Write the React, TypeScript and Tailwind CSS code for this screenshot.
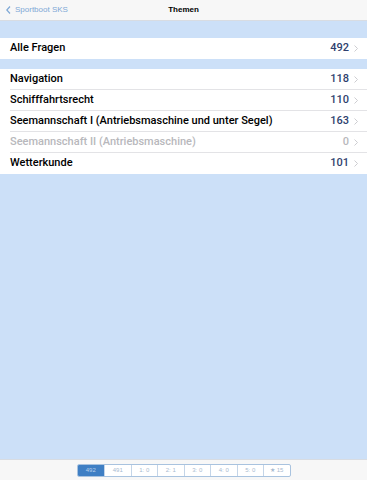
import React from "react";

const rows = [
  { title: "Navigation", count: 118 },
  { title: "Schifffahrtsrecht", count: 110 },
  { title: "Seemannschaft I (Antriebsmaschine und unter Segel)", count: 163 },
  { title: "Seemannschaft II (Antriebsmaschine)", count: 0, disabled: true },
  { title: "Wetterkunde", count: 101 },
];

const segments = ["492", "491", "1: 0", "2: 1", "3: 0", "4: 0", "5: 0", "★ 15"];

const Chevron: React.FC = () => (
  <svg width="4" height="7" viewBox="0 0 4 7" className="ml-[5px]">
    <path d="M0.5 0.5 L3.5 3.5 L0.5 6.5" fill="none" stroke="#c7c7cc" strokeWidth="0.9" />
  </svg>
);

const Row: React.FC<{ title: string; count: number; disabled?: boolean; last?: boolean }> = ({
  title,
  count,
  disabled,
  last,
}) => (
  <div className="flex h-[21px] items-center bg-white pl-[10px] font-['Roboto',sans-serif]">
    <div className={`flex h-full flex-1 items-center pr-[9px] ${last ? "" : "border-b border-[#e3e3e6]"}`}>
      <span className={`flex-1 text-[11px] font-medium ${disabled ? "text-[#b8b8bc]" : "text-black"}`}>
        {title}
      </span>
      <span className={`text-[11px] font-medium ${disabled ? "text-[#b8b8bc]" : "text-[#2f3f6e]"}`}>{count}</span>
      <Chevron />
    </div>
  </div>
);

export default function App() {
  return (
    <div
      className="flex h-[480px] w-[367px] flex-col bg-[#cce0f8]"
      style={{ fontFamily: '"Liberation Sans", Arial, sans-serif' }}
    >
      <div className="relative flex h-[21px] items-center justify-center border-b border-[#d8dce2] bg-[#f7f7f7]">
        <div className="absolute left-[6px] top-0 flex h-full items-center text-[8px] text-[#7ea8d6]">
          <svg width="5" height="8" viewBox="0 0 5 8" className="mr-[4px]">
            <path d="M4 0.5 L0.8 4 L4 7.5" fill="none" stroke="#7ea8d6" strokeWidth="1.2" />
          </svg>
          Sportboot SKS
        </div>
        <span className="text-[8px] font-semibold text-black">Themen</span>
      </div>

      <div className="mt-[17px]">
        <Row title="Alle Fragen" count={492} last />
      </div>

      <div className="mt-[10px]">
        {rows.map((r, i) => (
          <Row key={r.title} {...r} last={i === rows.length - 1} />
        ))}
      </div>

      <div className="flex-1" />

      <div className="flex h-[21px] items-center justify-center border-t border-[#d8dce2] bg-[#f7f7f7]">
        <div className="flex h-[13px] overflow-hidden rounded-[2px] border border-[#a9c3df] bg-white">
          {segments.map((s, i) => (
            <div
              key={s}
              className={`flex w-[26.5px] items-center justify-center text-[6px] ${
                i === 0 ? "bg-[#3f7fc4] text-[#b7d0ec]" : "text-[#a8bad0]"
              } ${i > 0 ? "border-l border-[#c4d5e8]" : ""}`}
            >
              {s}
            </div>
          ))}
        </div>
      </div>
    </div>
  );
}
